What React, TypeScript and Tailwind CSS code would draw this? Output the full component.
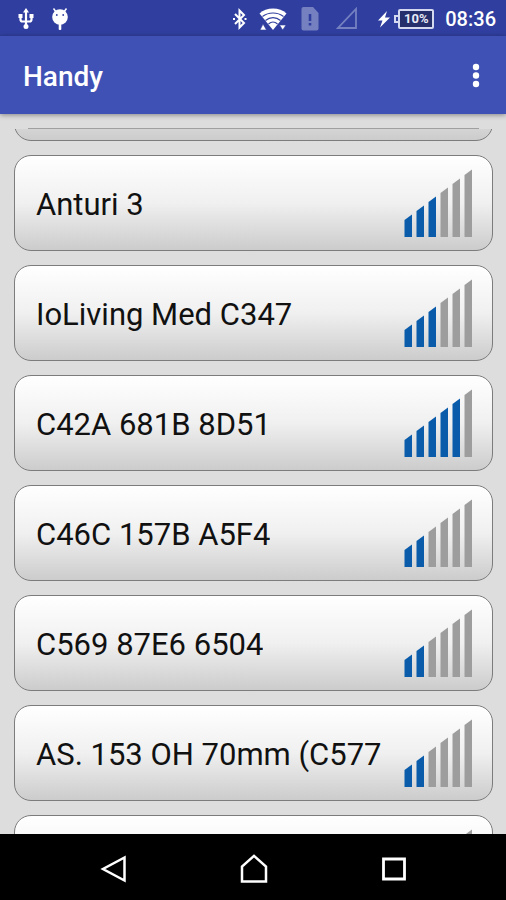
type Device = { name: string; level: number };

const devices: Device[] = [
  { name: "Anturi 3", level: 3 },
  { name: "IoLiving Med C347", level: 3 },
  { name: "C42A 681B 8D51", level: 5 },
  { name: "C46C 157B A5F4", level: 2 },
  { name: "C569 87E6 6504", level: 2 },
  { name: "AS. 153 OH 70mm (C577", level: 2 },
  { name: "", level: 0 },
];

const BARS = [0, 1, 2, 3, 4, 5];

function Signal({ level }: { level: number }) {
  return (
    <svg
      role="img"
      aria-label={`Signal ${level} of 6`}
      width="68"
      height="68"
      viewBox="0 0 68 68"
      className="shrink-0"
    >
      {BARS.map((i) => (
        <polygon
          key={i}
          points={`${12 * i + 0.5},${51 - 9 * i} ${12 * i + 8},${45.5 - 9 * i} ${12 * i + 8},68 ${12 * i + 0.5},68`}
          fill={i < level ? "#0a5cab" : "#9d9d9d"}
        />
      ))}
    </svg>
  );
}

function DeviceCard({ name, level }: Device) {
  return (
    <button
      type="button"
      className="flex h-24 w-full shrink-0 items-center justify-between rounded-[17px] border border-[#7c7c7c] bg-linear-to-b from-white via-[#f0f0f0] to-[#cccccc] pr-5 pl-[21px] text-left"
    >
      <span className="truncate pt-1 text-[31px] leading-9 text-[#111111]">{name}</span>
      <Signal level={level} />
    </button>
  );
}

function StatusBar() {
  return (
    <div className="flex h-9 shrink-0 items-center justify-between bg-[#303f9f] pt-0.5 pr-2.5 pl-[18px] text-white">
      <div className="flex items-center gap-[17px]">
        {/* USB */}
        <svg width="16" height="24" viewBox="0 0 16 24" fill="none" stroke="#fff" strokeWidth="2.2">
          <path d="M8 4v17M2.5 9v3.5q0 2 2 2H11.500q2 0 2-2V9" />
          <path d="M8 1l3 4.500H5zM5.500 19.500a2.500 2.500 0 1 0 5 0a2.500 2.500 0 1 0-5 0z" fill="#fff" stroke="none" />
          <path d="M.5 7h4v4h-4zM11.500 7h4v4h-4z" fill="#fff" stroke="none" />
        </svg>
        {/* Debugging */}
        <svg width="18" height="24" viewBox="0 0 18 24">
          <path d="M2.500 1.500l3 4M15.500 1.500l-3 4" stroke="#fff" strokeWidth="1.500" />
          <circle cx="9" cy="10" r="7.800" fill="#fff" />
          <rect x="7.700" y="16" width="2.600" height="7" rx="1" fill="#fff" />
          <circle cx="5.800" cy="8" r=".9" fill="#303f9f" />
          <circle cx="12.200" cy="8" r=".9" fill="#303f9f" />
        </svg>
      </div>
      <div className="flex items-center">
        {/* Bluetooth */}
        <svg width="14" height="22" viewBox="0 0 14 22" fill="none" stroke="#fff" strokeWidth="2" className="mr-3">
          <path d="M2 6l9 9-4.500 4.500v-17L11 7l-9 9" />
          <path d="M0 10h2v2H0zM11.500 10h2v2h-2z" fill="#fff" stroke="none" />
        </svg>
        {/* Wi-Fi */}
        <svg width="28" height="24" viewBox="0 0 28 24" className="mr-[14px]">
          <path d="M14 1.500C8.800 1.500 4 3.300.5 6.500L14 23 27.500 6.500C24 3.300 19.200 1.500 14 1.500z" fill="#fff" />
          <path d="M3.500 9.500C9.500 4.800 18.500 4.800 24.500 9.500M6.500 13.500C11 9.600 17 9.600 21.500 13.500M9.500 17C12.500 14.400 15.500 14.400 18.500 17" fill="none" stroke="#303f9f" strokeWidth="1.100" />
          <path d="M1 23l3-6 3.500 6zM20.500 18h6.500l-3.300 5z" fill="#fff" stroke="#303f9f" strokeWidth=".6" />
        </svg>
        {/* SIM missing */}
        <svg width="18" height="24" viewBox="0 0 18 24" className="mr-[17px]">
          <path d="M2.500 0H12l5.500 6v15.500q0 2-2 2h-13q-2 0-2-2V2q0-2 2-2z" fill="#7480c0" />
          <path d="M7.700 7h2.600v7H7.700zM7.700 16h2.600v2.500H7.700z" fill="#303f9f" />
        </svg>
        {/* No signal */}
        <svg width="22" height="24" viewBox="0 0 22 24" fill="none" stroke="#7480c0" strokeWidth="1.800" className="mr-5">
          <path d="M20 2v19H2z" />
        </svg>
        {/* Battery */}
        <svg width="12" height="18" viewBox="0 0 12 18" fill="#fff" className="mr-1">
          <path d="M9 1L0 10.500h4.500L2 17.500l10-10H7z" />
        </svg>
        <div className="mr-[11px] flex items-center">
          <span className="h-2 w-1 border-y-2 border-l-2 border-[#d5d9f0]" />
          <span className="flex h-5 w-9 items-center justify-center rounded-xs border-2 border-[#d5d9f0] bg-[#252f6b] text-[13px] leading-4 font-bold text-[#e8eaf6]">
            10%
          </span>
        </div>
        <time className="text-[20px] leading-6 font-medium">08:36</time>
      </div>
    </div>
  );
}

export default function App() {
  return (
    <div className="flex h-screen flex-col overflow-hidden bg-[#dddddd] font-['Roboto',sans-serif]">
      <StatusBar />
      <header className="z-10 flex h-[78px] shrink-0 items-center justify-between bg-[#3f51b5] pt-0.5 pr-[18px] pl-[23px] shadow-[0_1px_5px_rgba(0,0,0,0.4)]">
        <h1 className="pt-0.5 text-[28px] leading-8 font-medium text-white">Handy</h1>
        <button type="button" aria-label="More options" className="flex w-6 justify-center">
          <svg width="8" height="26" viewBox="0 0 8 26" fill="#fff">
            <circle cx="4" cy="4" r="3.200" />
            <circle cx="4" cy="12.500" r="3.200" />
            <circle cx="4" cy="21" r="3.200" />
          </svg>
        </button>
      </header>
      <main className="min-h-0 flex-1 overflow-hidden pt-[14px] pr-[13px] pl-[14px]">
        <div className="mx-[14px] h-px bg-[#a0a0a0]" />
        <ul className="flex flex-col gap-[14px]">
          <li className="flex h-3 items-end overflow-hidden">
            <DeviceCard name="" level={0} />
          </li>
          {devices.map((d, i) => (
            <li key={i}>
              <DeviceCard {...d} />
            </li>
          ))}
        </ul>
      </main>
      <nav className="flex h-[66px] shrink-0 items-center justify-center gap-[112px] bg-black pt-1 pl-0.5">
        <button type="button" aria-label="Back">
          <svg width="28" height="30" viewBox="0 0 28 30" fill="none" stroke="#fff" strokeWidth="2.500">
            <path d="M24.500 3.500v23L3 15z" />
          </svg>
        </button>
        <button type="button" aria-label="Home">
          <svg width="28" height="30" viewBox="0 0 28 30" fill="none" stroke="#fff" strokeWidth="2.500">
            <path d="M2 27.500V12.500L14 1.800l12 10.700v15z" />
          </svg>
        </button>
        <button type="button" aria-label="Recent apps">
          <svg width="28" height="30" viewBox="0 0 28 30" fill="none" stroke="#fff" strokeWidth="2.800">
            <path d="M3.500 5h21v20h-21z" />
          </svg>
        </button>
      </nav>
    </div>
  );
}
